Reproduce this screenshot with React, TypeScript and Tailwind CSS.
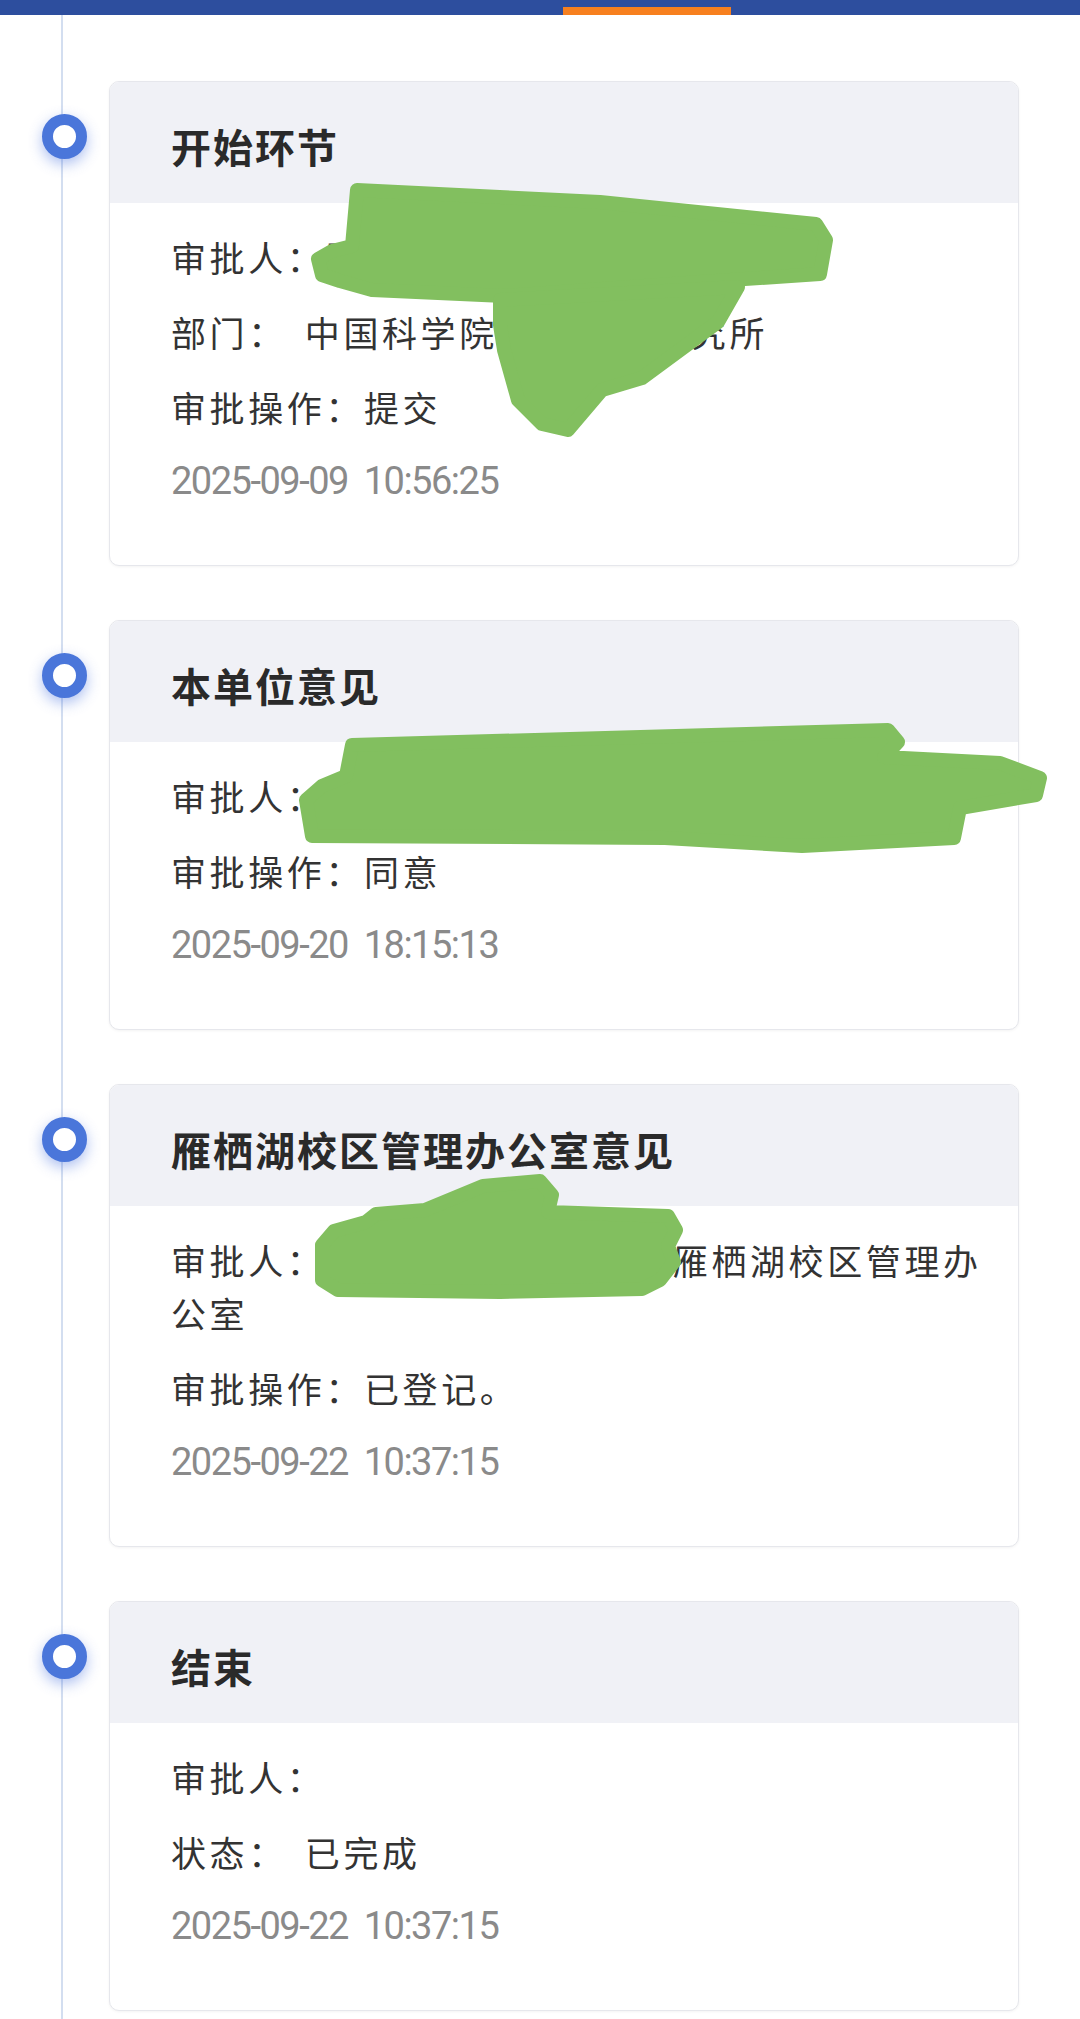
import React from 'react';

interface Row {
  label: string;
  value: string;
  indent?: boolean;
}

interface Step {
  title: string;
  rows: Row[];
  time: string;
}

const steps: Step[] = [
  {
    title: '开始环节',
    rows: [
      { label: '审批人：', value: '张某某' },
      { label: '部门：', value: '中国科学院某某某某研究所', indent: true },
      { label: '审批操作：', value: '提交' },
    ],
    time: '2025-09-09  10:56:25',
  },
  {
    title: '本单位意见',
    rows: [
      { label: '审批人：', value: '张某某' },
      { label: '审批操作：', value: '同意' },
    ],
    time: '2025-09-20  18:15:13',
  },
  {
    title: '雁栖湖校区管理办公室意见',
    rows: [
      { label: '审批人：', value: '张某某\u3000中科院大学雁栖湖校区管理办公室' },
      { label: '审批操作：', value: '已登记。' },
    ],
    time: '2025-09-22  10:37:15',
  },
  {
    title: '结束',
    rows: [
      { label: '审批人：', value: '' },
      { label: '状态：', value: '已完成', indent: true },
    ],
    time: '2025-09-22  10:37:15',
  },
];

function TimelineCard({ step }: { step: Step }) {
  return (
    <div className="relative ml-[46px] mr-[61px]">
      <span className="absolute -left-[67px] top-[33px] h-[45px] w-[45px] rounded-full border-[11px] border-[#4a76da] bg-white shadow-[0_5px_14px_rgba(70,112,222,0.45)]" />
      <div className="overflow-hidden rounded-[10px] border border-[#e6e7ec] bg-white shadow-[0_1px_3px_rgba(0,0,0,0.05)]">
        <div className="flex h-[121px] items-center bg-[#f0f1f6] pl-[61px] pt-[6px]">
          <h3 className="text-[40px] font-bold leading-none tracking-[2px] text-[#2a2a2a]">{step.title}</h3>
        </div>
        <div className="flex flex-col gap-[22px] pb-[57px] pl-[61px] pr-[30px] pt-[27px] text-[35px] leading-[53px] tracking-[3.6px] text-[#333333]">
          {step.rows.map((row) => (
            <p key={row.label}>
              {row.label}
              {row.indent ? <span className="ml-[18px]">{row.value}</span> : row.value}
            </p>
          ))}
          <p className="whitespace-pre font-['Roboto',sans-serif] text-[38px] tracking-[-1.5px] text-[#8a8a8a]">{step.time}</p>
        </div>
      </div>
    </div>
  );
}

function Scribbles() {
  return (
    <svg
      className="pointer-events-none absolute left-0 top-0 h-[2019px] w-[1080px]"
      viewBox="0 0 1080 2019"
      fill="#82bf5f"
      stroke="#82bf5f"
      strokeWidth={14}
      strokeLinejoin="round"
    >
      <path d="M357 190 L600 202 L816 224 L826 240 L820 274 L700 282 L504 296 L372 290 L340 281 L322 275 L318 259 L332 251 L352 246 Z" />
      <path d="M500 300 L738 287 L718 322 L642 378 L602 390 L568 430 L542 424 L518 400 L504 350 L500 325 Z" />
      <path d="M352 745 L888 730 L898 742 L884 757 L1000 763 L1040 778 L1036 795 L960 808 L954 838 L802 846 L665 838 L312 836 L306 800 L322 786 L346 776 Z" />
      <path d="M322 1245 L334 1231 L366 1222 L376 1214 L425 1210 L483 1186 L540 1181 L552 1195 L548 1212 L668 1216 L676 1230 L668 1246 L674 1262 L660 1280 L642 1289 L500 1292 L338 1290 L322 1280 Z" />
    </svg>
  );
}

export default function App() {
  return (
    <div className="relative h-[2019px] w-full overflow-hidden bg-white font-['Noto_Sans_CJK_SC',sans-serif]">
      <div className="relative h-[15px] bg-[#2d4e9e]">
        <div className="absolute bottom-0 left-[563px] h-[8px] w-[168px] bg-[#f7801f]" />
      </div>
      <div className="ml-[61px] flex flex-col gap-[54px] border-l-2 border-[#d3def0] pb-[40px] pt-[66px]">
        {steps.map((step) => (
          <TimelineCard key={step.title} step={step} />
        ))}
      </div>
      <Scribbles />
    </div>
  );
}
